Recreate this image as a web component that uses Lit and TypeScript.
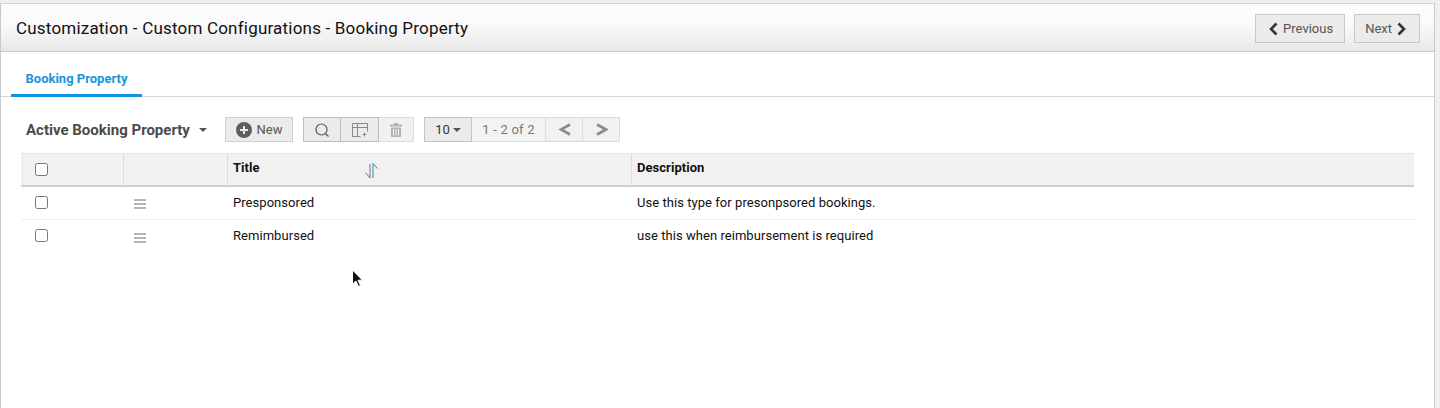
import { LitElement, html, css, svg } from "lit";
import { customElement } from "lit/decorators.js";

const rows = [
  { title: "Presponsored", description: "Use this type for presonpsored bookings." },
  { title: "Remimbursed", description: "use this when reimbursement is required" },
];

const chevronLeft = svg`<path d="M8.500 1.500 3 7l5.500 5.500" fill="none" stroke="currentColor" stroke-width="2.600"/>`;
const chevronRight = svg`<path d="M2.500 1.500 8 7l-5.500 5.500" fill="none" stroke="currentColor" stroke-width="2.600"/>`;
const wideLeft = svg`<path d="M12 1.500 3 6.500l9 5" fill="none" stroke="currentColor" stroke-width="2.600"/>`;
const wideRight = svg`<path d="M2 1.500l9 5-9 5" fill="none" stroke="currentColor" stroke-width="2.600"/>`;

@customElement("app-root")
export class AppRoot extends LitElement {
  static styles = css`
    :host {
      display: block;
      height: 408px;
      overflow: hidden;
      font-family: Roboto, "Liberation Sans", sans-serif;
      background: #f0f0f0;
      color: #222;
    }
    .frame {
      position: relative;
      box-sizing: border-box;
      width: 1435px;
      height: 408px;
      margin-top: 3px;
      background: #fff;
      border-left: 1px solid #c8c8c8;
      border-right: 1px solid #c8c8c8;
      border-top: 1px solid #d4d4d4;
    }
    .header {
      box-sizing: border-box;
      height: 48px;
      padding: 2px 14px 0 15px;
      display: flex;
      align-items: center;
      justify-content: space-between;
      background: linear-gradient(#fdfdfd, #fafafa 40%, #e8e8e8);
      border-bottom: 1px solid #c9c9c9;
    }
    h1 {
      margin: 0;
      padding-bottom: 2px;
      font-size: 17px;
      font-weight: 400;
      letter-spacing: 0.2px;
      color: #111;
    }
    .pager {
      display: flex;
      gap: 9px;
    }
    .pager button {
      box-sizing: border-box;
      height: 29px;
      padding: 0 11px 0 12px;
      display: flex;
      align-items: center;
      gap: 4px;
      background: #ebebeb;
      border: 1px solid #c8c8c8;
      font: inherit;
      font-size: 13px;
      color: #555;
    }
    .pager button.next {
      padding: 0 12px 0 10px;
    }
    .pager svg {
      width: 11px;
      height: 14px;
      color: #333;
    }
    .tabs {
      box-sizing: border-box;
      height: 45px;
      padding-left: 10px;
      display: flex;
      border-bottom: 1px solid #d6d6d6;
    }
    .tab {
      box-sizing: border-box;
      width: 131px;
      height: 45px;
      padding-top: 19px;
      text-align: center;
      font-size: 13px;
      font-weight: 700;
      color: #1a94db;
      border-bottom: 3px solid #0d96e6;
    }
    .toolbar {
      height: 25px;
      margin-top: 20px;
      padding-left: 20px;
      display: flex;
      align-items: center;
    }
    .view {
      width: 204px;
      display: flex;
      align-items: center;
      font-size: 15px;
      font-weight: 700;
      padding-left: 5px;
      box-sizing: border-box;
      color: #4a4a4a;
    }
    .caret {
      width: 0;
      height: 0;
      border: 4px solid transparent;
      border-top-color: #555;
      border-bottom: 0;
    }
    .view .caret {
      margin-left: 9px;
    }
    .btn {
      box-sizing: border-box;
      height: 25px;
      display: flex;
      align-items: center;
      justify-content: center;
      background: #ebebeb;
      border: 1px solid #cfcfcf;
      font-size: 13px;
      color: #555;
    }
    .btn + .btn {
      border-left: 0;
    }
    .group {
      display: flex;
    }
    .new {
      width: 68px;
      gap: 5px;
      margin-right: 10px;
    }
    .new svg {
      width: 16px;
      height: 16px;
    }
    .tools {
      margin-right: 10px;
    }
    .tools .btn {
      width: 38px;
    }
    .tools .btn:first-child {
      border-color: #bdbdbd;
    }
    .tools .btn:nth-child(2) {
      border: 1px solid #bdbdbd;
      border-left: 0;
    }
    .tools .btn:last-child {
      width: 35px;
      background: #f1f1f1;
      border-color: #dcdcdc;
    }
    .size {
      width: 48px;
      gap: 3px;
      font-size: 13px;
      color: #333;
      border-color: #c4c4c4;
    }
    .count {
      width: 74px;
      background: #f3f3f3;
      color: #777;
      border-color: #dcdcdc;
      letter-spacing: 0.2px;
    }
    .arrow {
      width: 37px;
      background: #f1f1f1;
      border-color: #dcdcdc;
      color: #8c8c8c;
    }
    .arrow svg {
      width: 13px;
      height: 13px;
    }
    .grid {
      margin: 11px 20px 0 20px;
      font-size: 13px;
      letter-spacing: 0.05px;
    }
    .line {
      display: grid;
      grid-template-columns: 103px 104px 404px 1fr;
      align-items: center;
    }
    .head {
      height: 34px;
      background: #f1f1f1;
      border-top: 1px solid #e2e2e2;
      border-bottom: 2px solid #cfcfcf;
      box-sizing: border-box;
      font-weight: 700;
      color: #111;
    }
    .head > div {
      box-sizing: border-box;
      height: 31px;
      display: flex;
      align-items: center;
      border-right: 1px solid #dcdcdc;
      padding-bottom: 5px;
    }
    .head > div:last-child {
      border-right: 0;
    }
    .row {
      height: 33px;
      box-sizing: border-box;
      border-bottom: 1px solid #efefef;
      color: #111;
    }
    .row:last-child {
      border-bottom: 0;
    }
    .cell {
      padding-left: 5px;
    }
    .row .cell {
      padding-bottom: 2px;
    }
    .check {
      padding-left: 14px;
      display: flex;
      align-items: center;
    }
    .head .check {
      padding-bottom: 0;
    }
    .row .check {
      padding-bottom: 2px;
    }
    .check i {
      box-sizing: border-box;
      display: block;
      width: 13px;
      height: 13px;
      border: 1px solid #767676;
      border-radius: 2.5px;
      background: #fff;
    }
    .drag {
      padding: 2px 0 0 10px;
      display: flex;
    }
    .drag svg {
      width: 12px;
      height: 12px;
    }
    .title-head {
      position: relative;
    }
    .sort {
      position: absolute;
      left: 136px;
      top: 8px;
      width: 15px;
      height: 17px;
    }
    .cursor {
      position: absolute;
      left: 351px;
      top: 269px;
      width: 12px;
      height: 19px;
    }
  `;

  render() {
    return html`
      <div class="frame">
        <div class="header">
          <h1>Customization - Custom Configurations - Booking Property</h1>
          <div class="pager">
            <button><svg viewBox="0 0 11 14">${chevronLeft}</svg>Previous</button>
            <button class="next">Next<svg viewBox="0 0 11 14">${chevronRight}</svg></button>
          </div>
        </div>
        <div class="tabs"><div class="tab">Booking Property</div></div>
        <div class="toolbar">
          <div class="view">Active Booking Property<span class="caret"></span></div>
          <div class="btn new">
            <svg viewBox="0 0 16 16">
              <circle cx="8" cy="8" r="8" fill="#5f5f5f" />
              <path d="M8 4v8M4 8h8" stroke="#ebebeb" stroke-width="2" />
            </svg>
            New
          </div>
          <div class="group tools">
            <div class="btn">
              <svg width="16" height="16" viewBox="0 0 16 16" fill="none" stroke="#555" stroke-width="1.200">
                <circle cx="7.500" cy="7.500" r="5.500" />
                <path d="m11.500 11.500 3 3" />
              </svg>
            </div>
            <div class="btn">
              <svg width="18" height="16" viewBox="0 0 18 16" fill="none" stroke="#888" stroke-width="1">
                <path d="M1.500 14.500v-13h15v8M1.500 5.500h15M6.500 1.500v13M1.500 14.500h8M13.500 10.500v4M11.500 12.500h4" />
              </svg>
            </div>
            <div class="btn">
              <svg width="12" height="14" viewBox="0 0 12 14" fill="#b4b4b4">
                <path d="M4 0h4v1.500h4v2H0v-2h4zM1 4.500h10V14H1zM3 6v6.500h1V6zm2.500 0v6.500h1V6zM8 6v6.500h1V6z" fill-rule="evenodd" />
              </svg>
            </div>
          </div>
          <div class="group">
            <div class="btn size">10<span class="caret"></span></div>
            <div class="btn count">1 - 2 of 2</div>
            <div class="btn arrow"><svg viewBox="0 0 13 13">${wideLeft}</svg></div>
            <div class="btn arrow"><svg viewBox="0 0 13 13">${wideRight}</svg></div>
          </div>
        </div>
        <div class="grid">
          <div class="line head">
            <div class="check"><i></i></div>
            <div></div>
            <div class="cell title-head">
              Title
              <svg class="sort" viewBox="0 0 15 17" fill="none" stroke-width="1">
                <path d="M6 2v14L1.500 10.500" stroke="#777" />
                <path d="M9 16V1.500l4.500 5" stroke="#1f8fc4" />
              </svg>
            </div>
            <div class="cell">Description</div>
          </div>
          ${rows.map(
            (r) => html`
              <div class="line row">
                <div class="check"><i></i></div>
                <div class="drag">
                  <svg viewBox="0 0 12 12" fill="#b5b5b5">
                    <path d="M0 1h12v2H0zM0 5h12v2H0zM0 9h12v2H0z" />
                  </svg>
                </div>
                <div class="cell">${r.title}</div>
                <div class="cell">${r.description}</div>
              </div>
            `
          )}
        </div>
      </div>
      <svg class="cursor" viewBox="0 0 12 19">
        <path d="M1.500 1v14l3.500-3 2.500 5.500 2-1-2.500-5.300h4.500z" fill="#111" stroke="#fff" stroke-width="1" />
      </svg>
    `;
  }
}
